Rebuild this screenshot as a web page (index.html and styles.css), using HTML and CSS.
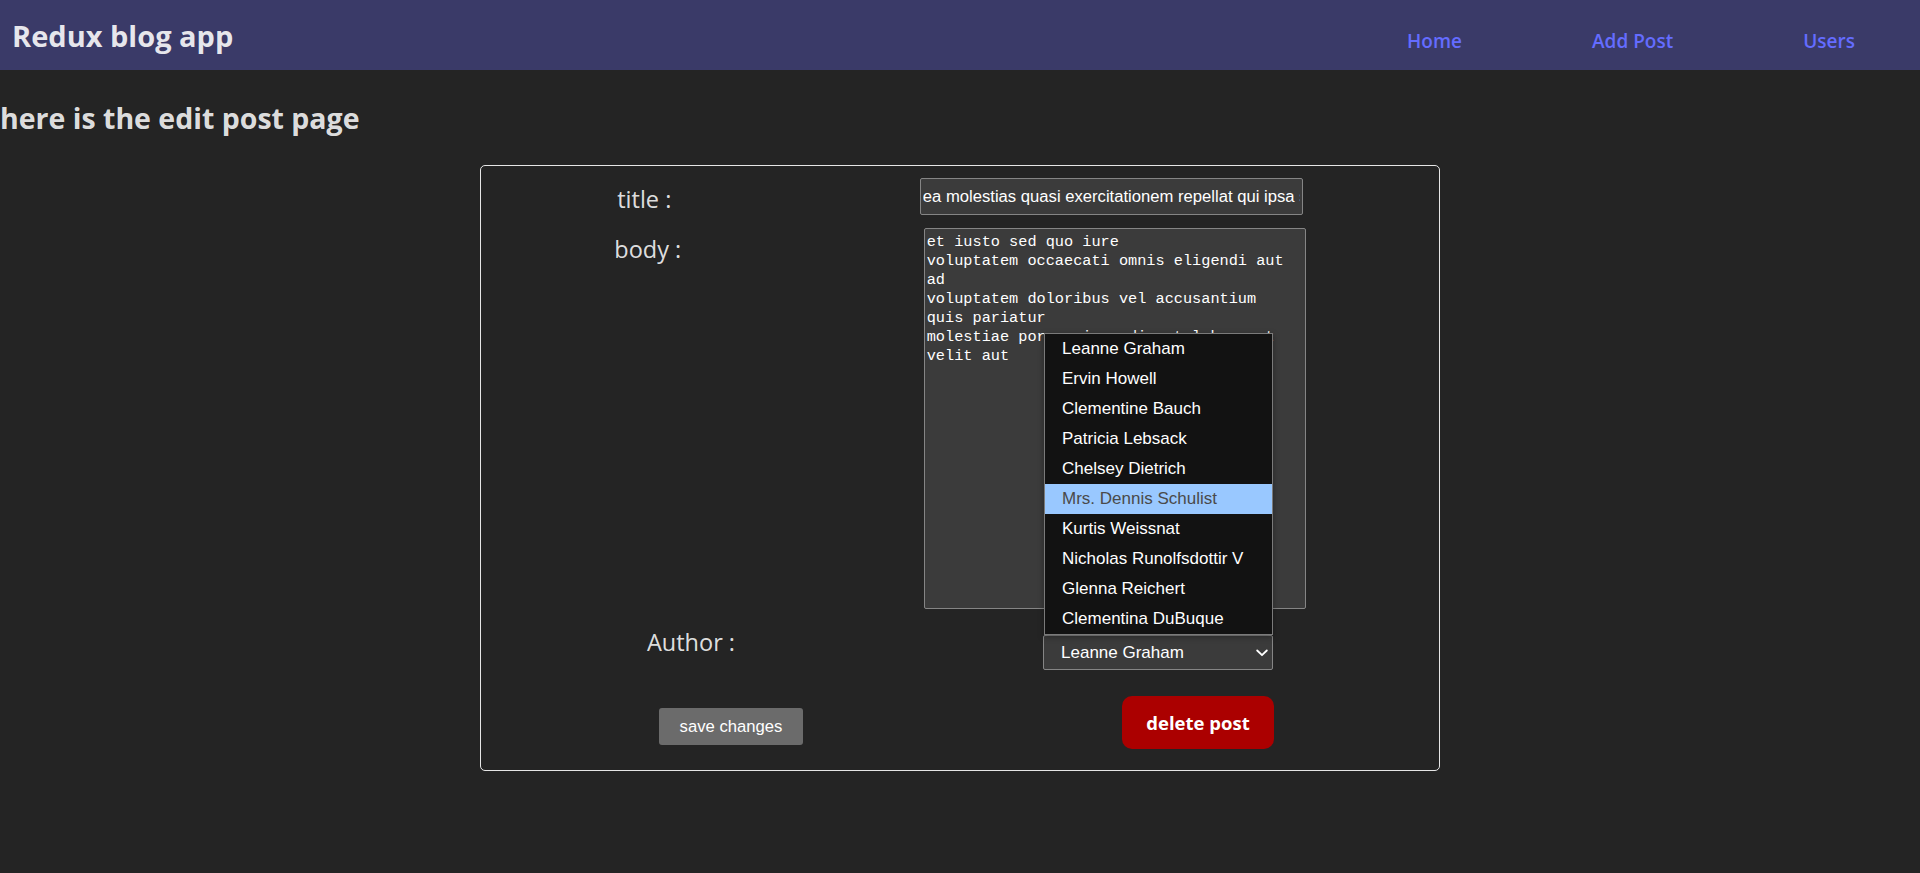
FILE: index.html
```html
<!DOCTYPE html>
<html lang="en">
<head>
<meta charset="utf-8">
<title>Redux blog app</title>
<link rel="stylesheet" href="styles.css">
</head>
<body>
<header class="topbar">
  <h1 class="brand">Redux blog app</h1>
  <nav class="nav">
    <ul class="nav-list">
      <li><a class="nav-link" href="#">Home</a></li>
      <li><a class="nav-link" href="#">Add Post</a></li>
      <li><a class="nav-link" href="#">Users</a></li>
    </ul>
  </nav>
</header>
<main class="page">
  <h2 class="page-title">here is the edit post page</h2>
  <form class="edit-form">
    <div class="row">
      <label class="row-label" for="postTitle">title :</label>
      <input class="field field-title" id="postTitle" type="text" value="ea molestias quasi exercitationem repellat qui ipsa sit aut">
    </div>
    <div class="row">
      <label class="row-label" for="postBody">body :</label>
      <textarea class="field field-body" id="postBody">et iusto sed quo iure
voluptatem occaecati omnis eligendi aut ad
voluptatem doloribus vel accusantium quis pariatur
molestiae porro eius odio et labore et velit aut</textarea>
    </div>
    <div class="row">
      <label class="row-label" for="postAuthor">Author :</label>
      <div class="select-wrap">
        <select class="field field-select" id="postAuthor">
          <option selected>Leanne Graham</option>
          <option>Ervin Howell</option>
          <option>Clementine Bauch</option>
          <option>Patricia Lebsack</option>
          <option>Chelsey Dietrich</option>
          <option>Mrs. Dennis Schulist</option>
          <option>Kurtis Weissnat</option>
          <option>Nicholas Runolfsdottir V</option>
          <option>Glenna Reichert</option>
          <option>Clementina DuBuque</option>
        </select>
        <svg class="select-chevron" width="12" height="8" viewBox="0 0 12 8" aria-hidden="true">
          <polyline points="1.2,1.5 6,6.2 10.8,1.5" fill="none" stroke="#ffffff" stroke-width="1.8" stroke-linecap="round" stroke-linejoin="round"/>
        </svg>
        <ul class="select-popup">
          <li class="popup-option">Leanne Graham</li>
          <li class="popup-option">Ervin Howell</li>
          <li class="popup-option">Clementine Bauch</li>
          <li class="popup-option">Patricia Lebsack</li>
          <li class="popup-option">Chelsey Dietrich</li>
          <li class="popup-option popup-option-active">Mrs. Dennis Schulist</li>
          <li class="popup-option">Kurtis Weissnat</li>
          <li class="popup-option">Nicholas Runolfsdottir V</li>
          <li class="popup-option">Glenna Reichert</li>
          <li class="popup-option">Clementina DuBuque</li>
        </ul>
      </div>
    </div>
    <div class="actions">
      <button class="btn-save" type="button">save changes</button>
      <button class="btn-delete" type="button">delete post</button>
    </div>
  </form>
</main>
</body>
</html>
```

FILE: styles.css
```css
html, body {
  margin: 0;
  padding: 0;
}

body {
  background: #242424;
  color: rgba(255, 255, 255, 0.87);
  font-family: "Open Sans", "Noto Sans", sans-serif;
  color-scheme: dark;
}

.topbar {
  height: 70px;
  background: #3a3a68;
  display: flex;
  align-items: center;
  padding-left: 12px;
}

.brand {
  margin: 2px 0 0;
  font-size: 29px;
  font-weight: 700;
  line-height: 40px;
  color: rgba(255, 255, 255, 0.88);
}

.nav {
  margin-left: auto;
  margin-top: 12px;
}

.nav-list {
  list-style: none;
  margin: 0;
  padding: 0;
  display: flex;
}

.nav-link {
  display: block;
  padding: 0 65px;
  font-size: 19px;
  font-weight: 600;
  line-height: 26px;
  color: #646cff;
  text-decoration: none;
}

.page-title {
  margin: 29px 0 27px;
  font-size: 28.5px;
  font-weight: 700;
  line-height: 39px;
  color: rgba(255, 255, 255, 0.87);
}

.edit-form {
  width: 960px;
  box-sizing: border-box;
  margin: 0 auto;
  border: 1px solid #e6e6e6;
  border-radius: 5px;
  padding: 12px 12px 21px;
  display: flex;
  flex-direction: column;
  gap: 12px;
}

.row {
  display: flex;
  justify-content: space-around;
  align-items: flex-start;
}

.row-label {
  font-size: 23.5px;
  line-height: 34px;
  padding-top: 4px;
  color: rgba(255, 255, 255, 0.87);
}

.field {
  box-sizing: border-box;
  background: #3b3b3b;
  color: #ffffff;
  border: 1px solid #858585;
  border-radius: 2px;
  font-family: "Liberation Sans", Arial, sans-serif;
  margin: 0;
  outline: none;
}

.field-title {
  width: 383px;
  height: 37px;
  padding: 0 2px;
  font-size: 16.65px;
}

.field-body {
  width: 382px;
  height: 381px;
  padding: 4px 10px 2px 2px;
  font-family: "Liberation Mono", "DejaVu Sans Mono", monospace;
  font-size: 15.25px;
  line-height: 19px;
  resize: none;
  overflow: hidden;
}

.select-wrap {
  position: relative;
  margin-top: 14px;
  width: 230px;
  height: 35px;
}

.field-select {
  display: block;
  width: 230px;
  height: 35px;
  padding: 0 24px 0 17px;
  font-size: 17px;
  appearance: none;
  -webkit-appearance: none;
}

.select-chevron {
  position: absolute;
  right: 5px;
  top: 14px;
  pointer-events: none;
}

.select-popup {
  position: absolute;
  left: 1px;
  right: 0;
  bottom: 100%;
  margin: 0;
  padding: 0;
  list-style: none;
  background: #121212;
  border: 1px solid #7a7a7a;
  box-shadow: 0 2px 6px rgba(0, 0, 0, 0.35);
}

.popup-option {
  height: 30px;
  line-height: 29px;
  padding-left: 17px;
  font-family: "Liberation Sans", Arial, sans-serif;
  font-size: 17px;
  color: #ffffff;
  white-space: nowrap;
}

.popup-option-active {
  background: #99c8ff;
  color: #4a4a4a;
}

.actions {
  display: flex;
  align-items: flex-start;
}

.btn-save {
  margin: 26px 0 0 166px;
  width: 144px;
  height: 37px;
  padding: 0;
  border: none;
  border-radius: 3px;
  background: #6b6b6b;
  color: #ffffff;
  font-family: "Liberation Sans", Arial, sans-serif;
  font-size: 16.67px;
}

.btn-delete {
  margin: 14px 153px 0 auto;
  width: 152px;
  height: 53px;
  padding: 0;
  border: none;
  border-radius: 10px;
  background: #ab0000;
  color: #ffffff;
  font-family: "Open Sans", "Noto Sans", sans-serif;
  font-size: 18.5px;
  font-weight: 700;
}
```
